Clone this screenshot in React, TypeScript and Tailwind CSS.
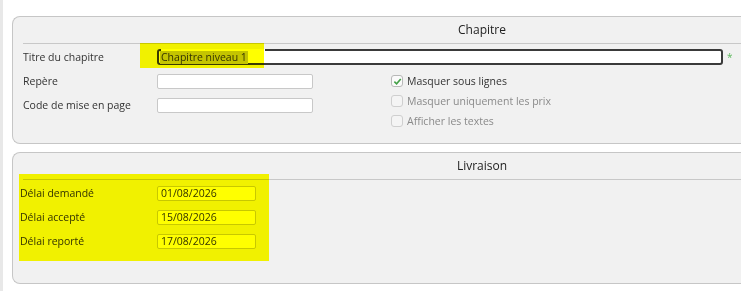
import type { ReactNode } from 'react';

function Panel({ title, height, children }: { title: string; height: string; children: ReactNode }) {
  return (
    <div className={`w-[929px] ${height} shrink-0 rounded-l-[8px] border border-r-0 border-[#c6c6c6] bg-[#f1f1f1] pl-[10px]`}>
      <div className="flex h-[27px] items-center justify-center border-b border-[#c8c8c8] text-[12px] text-[#222]">
        {title}
      </div>
      <div className="pt-[1px]">{children}</div>
    </div>
  );
}

function Label({ text, width }: { text: string; width: string }) {
  return <span className={`${width} pt-[1px] text-[10.5px] text-[#333]`}>{text}</span>;
}

function Field({ value, width }: { value?: string; width: string }) {
  return (
    <div
      className={`${width} flex h-[15px] items-center rounded-[2px] border border-[#c8c8c8] bg-white pl-[3px] text-[10.5px] leading-none text-[#333]`}
    >
      {value}
    </div>
  );
}

function Check({ label, checked, disabled }: { label: string; checked?: boolean; disabled?: boolean }) {
  return (
    <div className="flex h-[20px] items-center">
      <div
        className={`flex h-[12px] w-[12px] items-center justify-center rounded-[3px] border ${
          disabled ? 'border-[#cfcfcf] bg-[#f4f4f4]' : 'border-[#b8b8b8] bg-[#fafafa]'
        }`}
      >
        {checked && (
          <svg width="9" height="9" viewBox="0 0 10 10">
            <polyline points="1.5,5.2 4,7.6 8.6,2.2" fill="none" stroke="#43a047" strokeWidth="1.8" />
          </svg>
        )}
      </div>
      <span className={`ml-[4px] pt-[1px] text-[10.5px] ${disabled ? 'text-[#8a8a8a]' : 'text-[#333]'}`}>{label}</span>
    </div>
  );
}

export default function App() {
  return (
    <div className="relative flex h-[291px] w-[741px] overflow-hidden bg-white font-['Open_Sans',sans-serif]">
      <div className="h-full w-[3px] shrink-0 bg-[#e8e8e8]" />

      <div className="flex flex-col gap-[8px] pl-[9px] pt-[16px]">
        {/* Chapitre */}
        <Panel title="Chapitre" height="h-[128px]">
          <div className="flex h-[24px] items-center">
            <Label text="Titre du chapitre" width="w-[134px]" />
            <div className="relative flex h-[16px] w-[566px] items-center rounded-[3px] border-2 border-[#3a3a3a] bg-white pl-[1px] text-[10.5px] leading-none text-[#333]">
              {/* marker hides the top edge of the field */}
              <div className="absolute left-[2px] top-[-2px] h-[2px] w-[104px] bg-white" />
              <span className="flex h-[13px] items-center bg-[#c4c4c4] px-[1px] pt-[1px]">Chapitre niveau 1</span>
            </div>
            <span className="ml-[4px] text-[10px] text-[#5cb85c]">*</span>
          </div>
          <div className="flex">
            <div className="w-[368px]">
              <div className="flex h-[24px] items-center">
                <Label text="Repère" width="w-[134px]" />
                <Field width="w-[156px]" />
              </div>
              <div className="flex h-[24px] items-center">
                <Label text="Code de mise en page" width="w-[134px]" />
                <Field width="w-[156px]" />
              </div>
            </div>
            <div className="mt-[2px]">
              <Check label="Masquer sous lignes" checked />
              <Check label="Masquer uniquement les prix" disabled />
              <Check label="Afficher les textes" disabled />
            </div>
          </div>
        </Panel>

        {/* Livraison */}
        <Panel title="Livraison" height="h-[132px]">
          <div className="ml-[-3px]">
            <div className="flex h-[24px] items-center">
              <Label text="Délai demandé" width="w-[137px]" />
              <Field value="01/08/2026" width="w-[99px]" />
            </div>
            <div className="flex h-[24px] items-center">
              <Label text="Délai accepté" width="w-[137px]" />
              <Field value="15/08/2026" width="w-[99px]" />
            </div>
            <div className="flex h-[24px] items-center">
              <Label text="Délai reporté" width="w-[137px]" />
              <Field value="17/08/2026" width="w-[99px]" />
            </div>
          </div>
        </Panel>
      </div>

      {/* highlighter marks */}
      <div className="pointer-events-none absolute left-[140px] top-[43px] h-[25px] w-[124px] bg-[#ffff00] mix-blend-multiply" />
      <div className="pointer-events-none absolute left-[19px] top-[174px] h-[87px] w-[250px] bg-[#ffff00] mix-blend-multiply" />
    </div>
  );
}
